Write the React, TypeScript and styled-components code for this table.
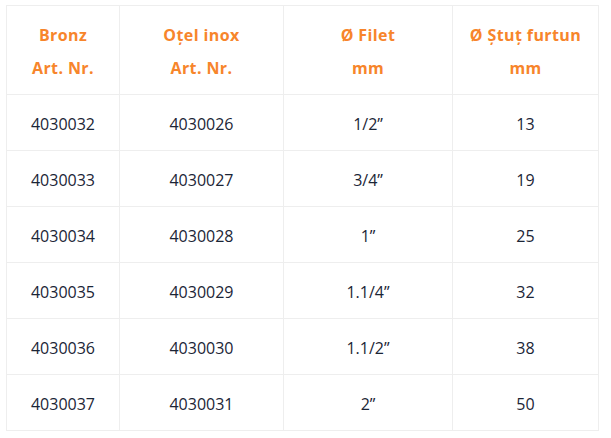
import styled, { createGlobalStyle } from "styled-components";

const GlobalStyle = createGlobalStyle`
  body {
    margin: 0;
    background: #ffffff;
    font-family: "Open Sans", "Liberation Sans", sans-serif;
  }
`;

const Page = styled.div`
  padding: 5px 6px;
`;

const Table = styled.table`
  border-collapse: collapse;
  width: 592px;
  table-layout: fixed;
  color: #1b2536;
  font-size: 16px;
`;

const HeadCell = styled.th<{ width: number }>`
  box-sizing: border-box;
  width: ${({ width }) => width}px;
  height: 89px;
  border: 1px solid #eeeeee;
  color: #f7852b;
  font-weight: 700;
  line-height: 33px;
  letter-spacing: 0.4px;
  text-align: center;
  padding: 4px 0 0;
`;

const Cell = styled.td`
  box-sizing: border-box;
  height: 56px;
  border: 1px solid #eeeeee;
  text-align: center;
  padding: 2px 0 0;
`;

const columns = [
  { width: 113, top: "Bronz", bottom: "Art. Nr." },
  { width: 164, top: "Oțel inox", bottom: "Art. Nr." },
  { width: 169, top: "Ø Filet", bottom: "mm" },
  { width: 146, top: "Ø Ștuț furtun", bottom: "mm" },
];

const rows = [
  ["4030032", "4030026", "1/2”", "13"],
  ["4030033", "4030027", "3/4”", "19"],
  ["4030034", "4030028", "1”", "25"],
  ["4030035", "4030029", "1.1/4”", "32"],
  ["4030036", "4030030", "1.1/2”", "38"],
  ["4030037", "4030031", "2”", "50"],
];

export default function App() {
  return (
    <Page>
      <GlobalStyle />
      <Table>
        <thead>
          <tr>
            {columns.map((c) => (
              <HeadCell key={c.top} width={c.width}>
                {c.top}
                <br />
                {c.bottom}
              </HeadCell>
            ))}
          </tr>
        </thead>
        <tbody>
          {rows.map((r) => (
            <tr key={r[0]}>
              {r.map((v, i) => (
                <Cell key={i}>{v}</Cell>
              ))}
            </tr>
          ))}
        </tbody>
      </Table>
    </Page>
  );
}
